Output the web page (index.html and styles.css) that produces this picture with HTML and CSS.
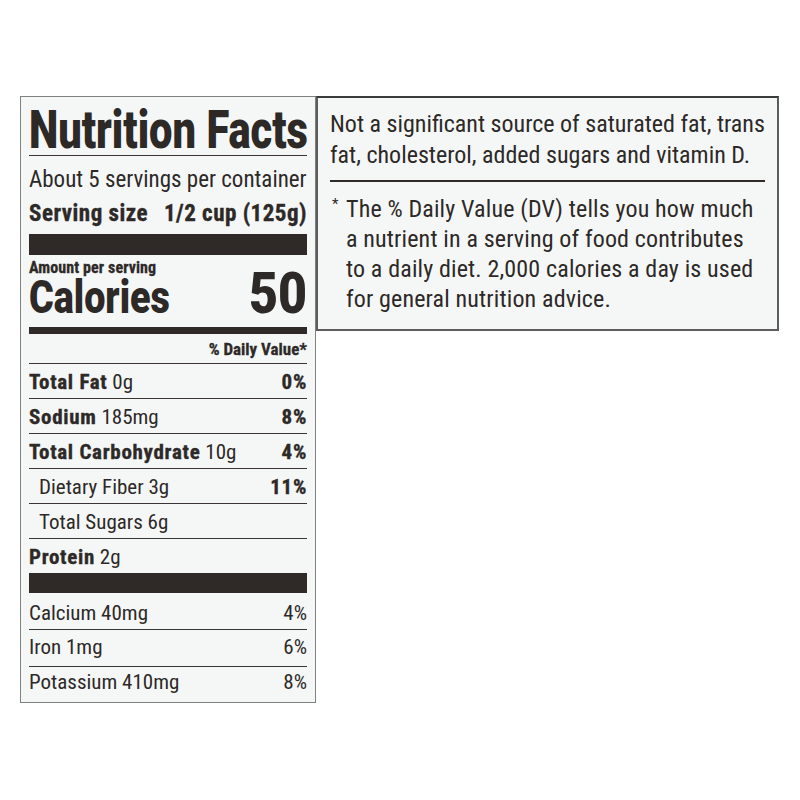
FILE: index.html
```html
<!DOCTYPE html>
<html lang="en">
<head>
<meta charset="utf-8">
<title>Nutrition Facts</title>
<link rel="stylesheet" href="styles.css">
</head>
<body>
<div class="page">
  <section class="label">
    <h1 class="title"><span class="title-text">Nutrition Facts</span></h1>
    <div class="servings">
      <div class="servings-count">About 5 servings per container</div>
      <div class="serving-size"><span>Serving size</span><span>1/2 cup (125g)</span></div>
    </div>
    <div class="bar bar-thick"></div>
    <div class="calories-block">
      <div class="amount">Amount per serving</div>
      <div class="calories"><span class="cal-label">Calories</span><span class="cal-value">50</span></div>
    </div>
    <div class="bar bar-medium"></div>
    <div class="dv-head">% Daily Value*</div>
    <div class="row"><span><b>Total Fat</b> 0g</span><b>0%</b></div>
    <div class="row"><span><b>Sodium</b> 185mg</span><b>8%</b></div>
    <div class="row"><span><b>Total Carbohydrate</b> 10g</span><b>4%</b></div>
    <div class="row row-sub"><span>Dietary Fiber 3g</span><b>11%</b></div>
    <div class="row row-sub"><span>Total Sugars 6g</span></div>
    <div class="row row-plain"><span><b>Protein</b> 2g</span></div>
    <div class="bar bar-section"></div>
    <div class="row vit vit-first"><span>Calcium 40mg</span><span>4%</span></div>
    <div class="row vit vit-mid"><span>Iron 1mg</span><span>6%</span></div>
    <div class="row vit vit-last"><span>Potassium 410mg</span><span>8%</span></div>
  </section>
  <section class="notes">
    <p class="notes-top">Not a significant source of saturated fat, trans<br>fat, cholesterol, added sugars and vitamin D.</p>
    <p class="notes-dv"><span class="asterisk">*</span>The % Daily Value (DV) tells you how much<br>a nutrient in a serving of food contributes<br>to a daily diet. 2,000 calories a day is used<br>for general nutrition advice.</p>
  </section>
</div>
</body>
</html>
```

FILE: styles.css
```css
body {
  margin: 0;
  background: #ffffff;
  font-family: "Roboto Condensed", Roboto, "Liberation Sans", sans-serif;
  font-stretch: condensed;
  color: #2d2927;
}

.page {
  display: flex;
  align-items: flex-start;
  padding: 96px 0 0 20px;
}

.label {
  width: 296px;
  box-sizing: border-box;
  border: 1px solid #808080;
  padding: 0 8px;
  background: #f5f7f7;
}

.title {
  margin: 0;
  height: 59px;
  box-sizing: border-box;
  padding-top: 8px;
  font-family: Roboto, "Liberation Sans", sans-serif;
  font-stretch: normal;
  font-size: 53px;
  line-height: 50px;
  font-weight: 900;
  white-space: nowrap;
  border-bottom: 1px solid #3a3532;
}

.title-text {
  display: inline-block;
  transform: scaleX(0.786);
  transform-origin: left center;
}

.servings {
  padding: 7px 0 3px;
  font-size: 23px;
  line-height: 34px;
  white-space: nowrap;
}

.serving-size {
  display: flex;
  justify-content: space-between;
  font-weight: 700;
  letter-spacing: 0.5px;
  -webkit-text-stroke: 0.35px currentColor;
}

.bar {
  background: #2f2a28;
}

.bar-thick {
  height: 21px;
}

.bar-medium {
  height: 7px;
}

.bar-section {
  height: 20px;
}

.calories-block {
  padding: 4px 0 10px;
}

.amount {
  font-size: 16px;
  line-height: 18px;
  font-weight: 700;
  letter-spacing: 0.1px;
  -webkit-text-stroke: 0.3px currentColor;
}

.calories {
  display: flex;
  justify-content: space-between;
  align-items: baseline;
  font-family: Roboto, "Liberation Sans", sans-serif;
  font-stretch: normal;
  font-size: 46px;
  line-height: 40px;
  font-weight: 900;
}

.cal-label {
  display: inline-block;
  transform: scaleX(0.82);
  transform-origin: left center;
}

.cal-value {
  display: inline-block;
  font-size: 57px;
  line-height: 32px;
  transform: scaleX(0.88);
  transform-origin: right center;
}

.dv-head {
  height: 30px;
  box-sizing: border-box;
  padding-top: 1px;
  text-align: right;
  font-size: 17px;
  line-height: 28px;
  font-weight: 700;
  -webkit-text-stroke: 0.3px currentColor;
  border-bottom: 1px solid #3a3532;
}

.row {
  display: flex;
  justify-content: space-between;
  height: 35px;
  box-sizing: border-box;
  padding-top: 3px;
  font-size: 21px;
  line-height: 31px;
  white-space: nowrap;
  border-bottom: 1px solid #3a3532;
}

.row b {
  font-weight: 700;
  letter-spacing: 0.7px;
  -webkit-text-stroke: 0.35px currentColor;
}

.row-sub {
  padding-left: 10px;
}

.row-plain {
  height: 34px;
  border-bottom: none;
}

.vit-first {
  height: 37px;
  padding-top: 5px;
}

.vit-mid {
  height: 37px;
  padding-top: 2px;
}

.vit-last {
  height: 35px;
  padding-top: 0;
  border-bottom: none;
}

.notes {
  width: 463px;
  height: 235px;
  box-sizing: border-box;
  border: 2px solid #5c5c5c;
  border-top-color: #3a3a3a;
  background: #f5f7f7;
  padding: 0 12px;
  font-size: 24px;
}

.notes-top {
  margin: 0;
  padding: 11px 0 10px;
  line-height: 30.5px;
  white-space: nowrap;
  border-bottom: 2px solid #2f2a28;
}

.notes-dv {
  margin: 0;
  padding: 12px 0 0 16px;
  line-height: 30px;
  letter-spacing: 0.15px;
  white-space: nowrap;
}

.asterisk {
  display: inline-block;
  width: 14px;
  margin-left: -14px;
  font-size: 15px;
  line-height: 20px;
  vertical-align: top;
}
```
